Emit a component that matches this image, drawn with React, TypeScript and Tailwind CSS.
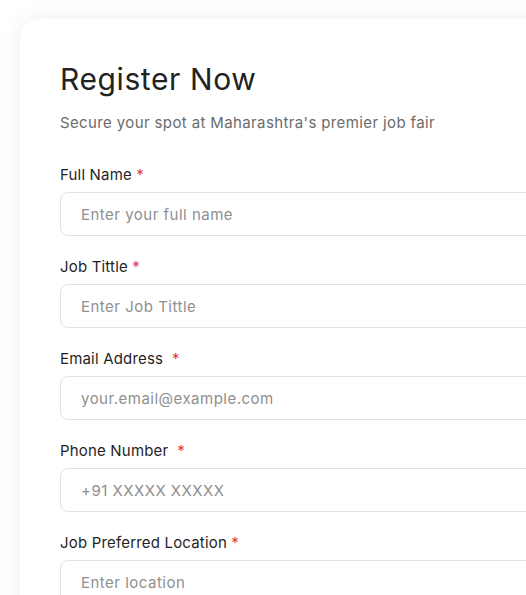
const fields = [
  { label: "Full Name", gap: false, placeholder: "Enter your full name" },
  { label: "Job Tittle", gap: false, placeholder: "Enter Job Tittle" },
  { label: "Email Address", gap: true, placeholder: "your.email@example.com" },
  { label: "Phone Number", gap: true, placeholder: "+91 XXXXX XXXXX" },
  { label: "Job Preferred Location", gap: false, placeholder: "Enter location" },
];

export default function App() {
  return (
    <div
      className="h-[595px] w-[526px] overflow-hidden bg-white"
      style={{ fontFamily: "Inter, 'Open Sans', sans-serif" }}
    >
      <div className="ml-[20px] mt-[19px] w-[620px] rounded-[20px] bg-white px-10 pt-10 pb-10 shadow-[0_0_24px_rgba(0,0,0,0.07)]">
        <h1 className="text-[30px] leading-[40px] font-normal tracking-[0.02em] text-[#222]">
          Register Now
        </h1>
        <p className="mt-[13px] text-[15px] leading-[22px] tracking-[0.025em] text-[#6b6b6b]">
          Secure your spot at Maharashtra's premier job fair
        </p>
        <form className="mt-[30px] flex flex-col gap-5">
          {fields.map((f) => (
            <div key={f.label} className="flex flex-col">
              <label className="whitespace-pre text-[15px] leading-[22px] tracking-[0.012em] text-[#1f1f1f]">
                {f.label}
                {f.gap ? "  " : " "}
                <span className="text-[#e53935]">*</span>
              </label>
              <input
                type="text"
                placeholder={f.placeholder}
                className="mt-[6px] h-[44px] w-full rounded-[8px] border border-[#e2e2e2] bg-white px-5 text-[15px] tracking-[0.033em] text-[#222] outline-none placeholder:text-[#8f8f8f]"
              />
            </div>
          ))}
        </form>
      </div>
    </div>
  );
}
